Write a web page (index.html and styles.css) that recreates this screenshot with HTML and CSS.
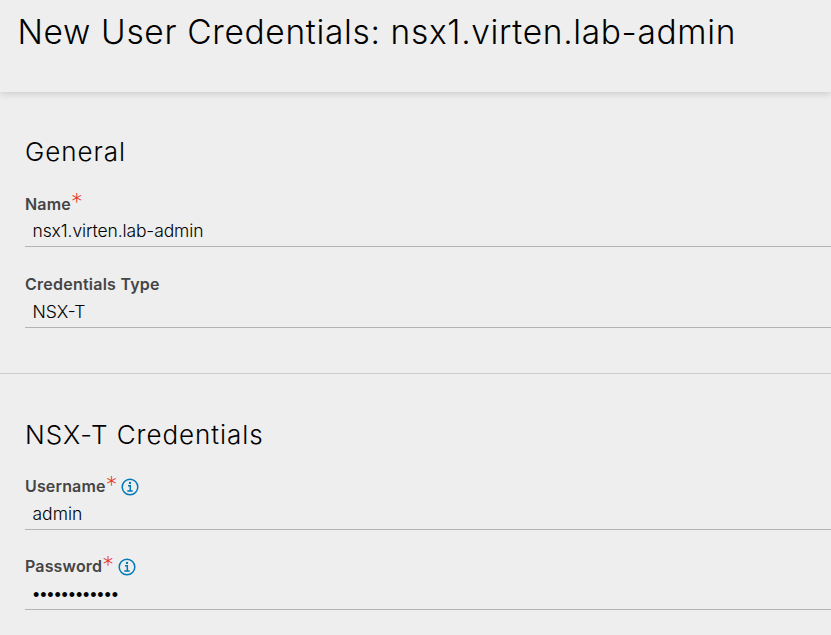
FILE: index.html
```html
<!DOCTYPE html>
<html lang="en">
<head>
<meta charset="utf-8">
<title>New User Credentials</title>
<link rel="stylesheet" href="styles.css">
</head>
<body>
<header class="header"><h1 class="title">New User Credentials: nsx1.virten.lab-admin</h1></header>
<main>
  <section class="section">
    <h2 class="heading heading-general">General</h2>
    <div class="field">
      <div class="label"><span>Name</span><span class="required">*</span></div>
      <div class="value value-name">nsx1.virten.lab-admin</div>
    </div>
    <div class="field">
      <div class="label label-type"><span>Credentials Type</span></div>
      <div class="value">NSX-T</div>
    </div>
  </section>
  <section class="section section-nsx">
    <h2 class="heading">NSX-T Credentials</h2>
    <div class="field">
      <div class="label"><span>Username</span><span class="required">*</span>
        <svg class="info" viewBox="0 0 18 18"><circle cx="9" cy="9" r="7.8"/><path d="M7 7.7h2.3v5.2M6.3 13h5.4"/><circle class="dot" cx="9" cy="4.9" r="1.2"/></svg>
      </div>
      <div class="value">admin</div>
    </div>
    <div class="field">
      <div class="label"><span>Password</span><span class="required">*</span>
        <svg class="info" viewBox="0 0 18 18"><circle cx="9" cy="9" r="7.8"/><path d="M7 7.7h2.3v5.2M6.3 13h5.4"/><circle class="dot" cx="9" cy="4.9" r="1.2"/></svg>
      </div>
      <div class="value value-pass">••••••••••••</div>
    </div>
  </section>
</main>
</body>
</html>
```
FILE: styles.css
```css
* { box-sizing: border-box; }
body {
  margin: 0;
  height: 635px;
  overflow: hidden;
  background: #eee;
  color: #000;
  font-family: Inter, "Open Sans", sans-serif;
}
.header {
  height: 92px;
  padding: 9px 0 0 17.5px;
  box-shadow: 0 2px 7px rgba(0, 0, 0, .14);
}
.title {
  margin: 0;
  font-size: 33.5px;
  line-height: 47px;
  font-weight: 300;
  letter-spacing: .66px;
  white-space: nowrap;
}
.section { height: 282px; padding: 42px 0 0 25px; border-bottom: 1px solid #ccc; }
.section-nsx { height: 261px; border: 0; padding-top: 43px; }
.heading { margin: 0 0 18px; font-size: 26px; line-height: 36px; font-weight: 300; letter-spacing: .95px; }
.field { height: 59px; border-bottom: 1px solid #b3b3b3; }
.field + .field { margin-top: 22px; }
.section-nsx .field + .field { margin-top: 21px; }
.label {
  display: flex;
  height: 30px;
  line-height: 32px;
  font-size: 16px;
  font-weight: 600;
  letter-spacing: .15px;
  color: #454545;
}
.label-type { line-height: 30px; letter-spacing: .24px; }
.section-nsx .label { line-height: 30px; }
.required { width: 11px; margin-left: 0; color: #e63226; font-size: 24px; font-weight: 250; line-height: 30px; }
.info { width: 18px; height: 18px; margin: 7px 0 0 4.5px; fill: none; stroke: #0079b8; stroke-width: 1.5; }
.info .dot { fill: #0079b8; stroke: none; }
.value { padding-left: 7.5px; font-size: 17.5px; line-height: 26px; font-weight: 300; }
.value-name { letter-spacing: -.11px; }
.value-pass { padding-left: 8px; font-family: "Liberation Sans", sans-serif; font-size: 18px; line-height: 28px; letter-spacing: .85px; }
```
